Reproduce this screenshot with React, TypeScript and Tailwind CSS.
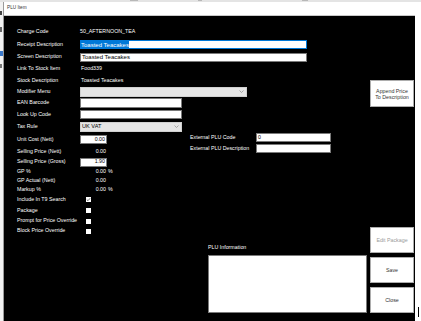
import React from "react";

function Label({ children }: { children: React.ReactNode }) {
  return <div className="w-[63px] shrink-0 text-white whitespace-nowrap">{children}</div>;
}

function Check({ checked }: { checked?: boolean }) {
  return (
    <div className="ml-[6px] w-[5px] h-[5px] bg-white flex items-center justify-center">
      {checked ? (
        <svg width="5" height="5" viewBox="0 0 5 5">
          <path d="M0.8 2.6 L2 3.7 L4.2 1.2" stroke="#555" strokeWidth="0.8" fill="none" />
        </svg>
      ) : null}
    </div>
  );
}

function Chevron() {
  return (
    <svg width="5" height="3" viewBox="0 0 5 3" className="shrink-0">
      <path d="M0.5 0.5 L2.5 2.5 L4.5 0.5" stroke="#8a8a8a" strokeWidth="0.7" fill="none" />
    </svg>
  );
}

function Btn({ children, disabled }: { children: React.ReactNode; disabled?: boolean }) {
  return (
    <div
      className={
        disabled
          ? "h-[26px] w-[44px] bg-white border border-[#adadad] flex items-center justify-center text-center text-[#9a9a9a] leading-[6px]"
          : "h-[26px] w-[44px] bg-white border border-[#adadad] flex items-center justify-center text-center text-[#333] leading-[6px]"
      }
    >
      {children}
    </div>
  );
}

export default function App() {
  return (
    <div className="w-[421px] h-[321px] bg-white relative overflow-hidden font-['Liberation_Sans',Arial,sans-serif] text-[5.3px] leading-none">
      <div className="h-[2px] w-full bg-[#e4e4e4] flex">
        <div className="ml-[130px] w-[8px] h-[1px] bg-[#b8b8b8]" />
        <div className="ml-[60px] w-[4px] h-[1px] bg-[#b8b8b8]" />
        <div className="ml-[100px] w-[6px] h-[1px] bg-[#b8b8b8]" />
      </div>
      <div className="flex h-[319px]">
        <div className="w-[3px] shrink-0 bg-[#f2f2f2] flex flex-col">
          <div className="mt-[9px] h-[4px] w-[2px] bg-[#444]" />
          <div className="mt-[12px] h-[5px] w-[2px] bg-[#666]" />
          <div className="mt-[19px] h-[5px] w-[3px] bg-[#3a78c9]" />
          <div className="mt-[8px] h-[4px] w-[2px] bg-[#777]" />
        </div>
        <div className="w-[412px] shrink-0 flex flex-col border-l border-[#9a9a9a]">
          <div className="h-[14px] bg-white flex items-center pl-[3px] text-[4.7px] text-[#333] border-b border-[#c8c8c8]">
            PLU Item
          </div>
          <div className="flex-1 bg-black flex">
            <div className="flex-1 flex flex-col pt-[10px] pl-[13px]">
              <div className="flex items-center h-[12px]">
                <Label>Charge Code</Label>
                <div className="text-white">50_AFTERNOON_TEA</div>
              </div>
              <div className="flex items-center h-[13px]">
                <Label>Receipt Description</Label>
                <div className="h-[9px] w-[227px] bg-white border border-[#0078d7] flex items-center text-[6px]">
                  <span className="bg-[#0078d7] text-white h-full flex items-center">Toasted Teacakes</span>
                </div>
              </div>
              <div className="flex items-center h-[12px]">
                <Label>Screen Description</Label>
                <div className="h-[9px] w-[227px] bg-white border border-[#7a7a7a] flex items-center pl-[1px] text-[6px] text-black">
                  Toasted Teacakes
                </div>
              </div>
              <div className="flex items-center h-[12px]">
                <Label>Link To Stock Item</Label>
                <div className="text-white pl-[1px]">Food339</div>
              </div>
              <div className="flex items-center h-[11px]">
                <Label>Stock Description</Label>
                <div className="text-white pl-[1px]">Toasted Teacakes</div>
              </div>
              <div className="flex items-center h-[11px]">
                <Label>Modifier Menu</Label>
                <div className="h-[10px] w-[167px] bg-[#e5e5e5] border border-[#d0d0d0] flex items-center justify-end pr-[2px]">
                  <Chevron />
                </div>
              </div>
              <div className="flex items-center h-[12px]">
                <Label>EAN Barcode</Label>
                <div className="h-[10px] w-[102px] bg-white border border-[#7a7a7a]" />
              </div>
              <div className="flex items-center h-[11px]">
                <Label>Look Up Code</Label>
                <div className="h-[9px] w-[102px] bg-white border border-[#7a7a7a]" />
              </div>
              <div className="flex items-center h-[13px]">
                <Label>Tax Rule</Label>
                <div className="h-[10px] w-[102px] bg-[#e5e5e5] border border-[#d0d0d0] flex items-center justify-between pl-[1px] pr-[2px] text-[5.6px] text-black">
                  <span>UK VAT</span>
                  <Chevron />
                </div>
              </div>
              <div className="flex">
                <div className="w-[173px] shrink-0 flex flex-col">
                  <div className="flex items-center h-[13px]">
                    <Label>Unit Cost (Nett)</Label>
                    <div className="h-[9px] w-[27px] bg-white border border-[#7a7a7a] flex items-center justify-end pr-[1px] text-black">
                      0.00
                    </div>
                  </div>
                  <div className="flex items-center h-[11px]">
                    <Label>Selling Price (Nett)</Label>
                    <div className="w-[27px] text-right text-white pr-[1px]">0.00</div>
                  </div>
                  <div className="flex items-center h-[10px]">
                    <Label>Selling Price (Gross)</Label>
                    <div className="h-[9px] w-[27px] bg-white border border-[#7a7a7a] flex items-center justify-end pr-[1px] text-black">
                      1.90
                    </div>
                  </div>
                  <div className="flex items-center h-[10px]">
                    <Label>GP %</Label>
                    <div className="w-[27px] text-right text-white pr-[1px]">0.00</div>
                    <div className="text-white pl-[1px]">%</div>
                  </div>
                  <div className="flex items-center h-[8px]">
                    <Label>GP Actual (Nett)</Label>
                    <div className="w-[27px] text-right text-white pr-[1px]">0.00</div>
                  </div>
                  <div className="flex items-center h-[9px]">
                    <Label>Markup %</Label>
                    <div className="w-[27px] text-right text-white pr-[1px]">0.00</div>
                    <div className="text-white pl-[1px]">%</div>
                  </div>
                  <div className="flex items-center h-[11px]">
                    <Label>Include In T9 Search</Label>
                    <Check checked />
                  </div>
                  <div className="flex items-center h-[11px]">
                    <Label>Package</Label>
                    <Check />
                  </div>
                  <div className="flex items-center h-[10px]">
                    <Label>Prompt for Price Override</Label>
                    <Check />
                  </div>
                  <div className="flex items-center h-[10px]">
                    <Label>Block Price Override</Label>
                    <Check />
                  </div>
                </div>
                <div className="flex flex-col gap-[2px]">
                  <div className="flex items-center h-[9px]">
                    <div className="w-[66px] text-white">External PLU Code</div>
                    <div className="h-[9px] w-[75px] bg-white border border-[#7a7a7a] flex items-center pl-[1px] text-black">0</div>
                  </div>
                  <div className="flex items-center h-[9px]">
                    <div className="w-[66px] text-white whitespace-nowrap">External PLU Description</div>
                    <div className="h-[9px] w-[75px] bg-white border border-[#7a7a7a]" />
                  </div>
                </div>
              </div>
              <div className="ml-[191px] mt-[9px] flex flex-col gap-[4px]">
                <div className="h-[6px] text-white">PLU Information</div>
                <div className="h-[58px] w-[159px] bg-white border border-[#7a7a7a]" />
              </div>
            </div>
            <div className="w-[44px] mr-[1px] shrink-0 flex flex-col pt-[64px] pb-[8px]">
              <div className="h-[27px] w-[44px] bg-white border border-[#adadad] flex flex-col items-center justify-center text-center text-[#333] leading-[6px]">
                <span>Append Price</span>
                <span>To Description</span>
              </div>
              <div className="flex-1" />
              <div className="flex flex-col gap-[4px]">
                <Btn disabled>Edit Package</Btn>
                <Btn>Save</Btn>
                <Btn>Close</Btn>
              </div>
            </div>
          </div>
        </div>
        <div className="flex-1 bg-white flex flex-col justify-end pb-[4px] items-end pr-[2px]">
          <div className="w-[1px] h-[10px] bg-black" />
        </div>
      </div>
    </div>
  );
}
